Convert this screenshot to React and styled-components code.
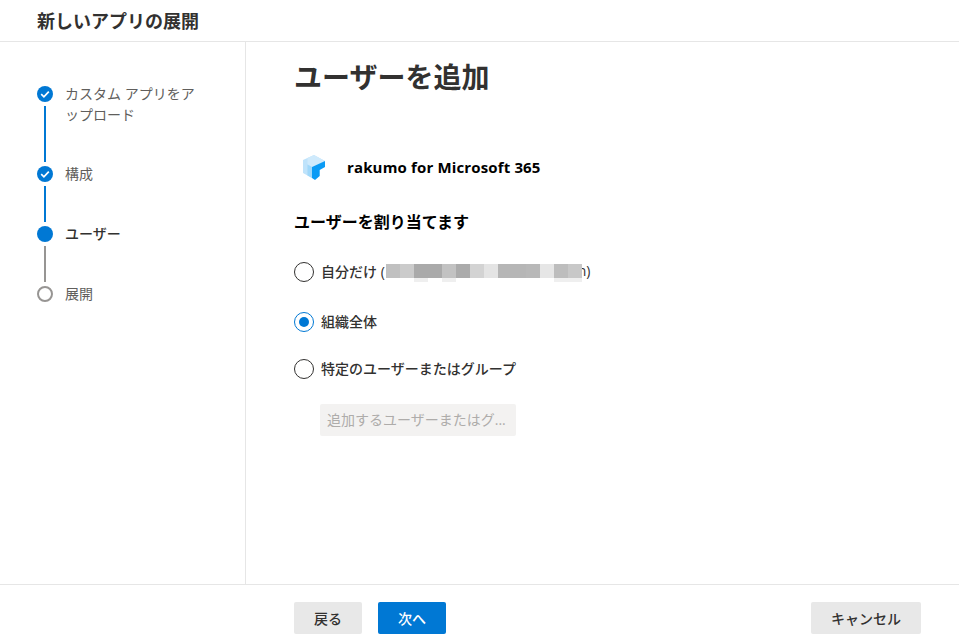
import React from 'react';
import styled, { createGlobalStyle } from 'styled-components';

const GlobalStyle = createGlobalStyle`
    html, body { margin: 0; padding: 0; background: #fff; }
    body { font-family: "Open Sans", "Noto Sans CJK JP", sans-serif; color: #323130; }
`
const Page = styled.div`
    width: 959px;
    height: 641px;
    display: flex;
    flex-direction: column;
    overflow: hidden;
`
const Header = styled.header`
    height: 42px;
    box-sizing: border-box;
    flex: none;
    display: flex;
    align-items: center;
    padding-left: 37px;
    border-bottom: solid 1px #e6e6e6;
`
const Title = styled.h1`
    margin: 0;
    font-size: 18px;
    font-weight: 700;
    line-height: 42px;
    color: #323130;
`
const Body = styled.div`
    flex: 1;
    display: flex;
    min-height: 0;
`
const Sidebar = styled.nav`
    width: 246px;
    flex: none;
    box-sizing: border-box;
    padding: 44px 0 0 37px;
    border-right: solid 1px #e6e6e6;
`
const Step = styled.div`
    display: flex;
    height: ${props => props.height}px;
`
const Rail = styled.div`
    width: 16px;
    flex: none;
    display: flex;
    flex-direction: column;
    align-items: center;
`
const Dot = styled.div`
    width: 16px;
    height: 16px;
    flex: none;
    box-sizing: border-box;
    border-radius: 50%;
    display: flex;
    align-items: center;
    justify-content: center;
    background: ${props => props.todo ? '#fff' : '#0078d4'};
    border: ${props => props.todo ? 'solid 2px #979593' : 'none'};
`
const Connector = styled.div`
    width: 2px;
    flex: 1;
    margin: 4px 0;
    background: ${props => props.todo ? '#979593' : '#0078d4'};
`
const StepLabel = styled.div`
    margin-left: 12px;
    width: 140px;
    margin-top: -3px;
    font-size: 14px;
    line-height: 21px;
    color: ${props => props.active ? '#323130' : '#605e5c'};
    font-weight: ${props => props.active ? 500 : 400};
`
const Main = styled.main`
    flex: 1;
    padding-left: 48px;
`
const Heading = styled.h2`
    margin: 0;
    padding-top: 15px;
    font-size: 28px;
    line-height: 40px;
    font-weight: 700;
    color: #323130;
`
const AppRow = styled.div`
    display: flex;
    align-items: center;
    margin-top: 50px;
    height: 40px;
`
const AppLogo = styled.svg`
    width: 22px;
    height: 25px;
    margin-left: 9px;
`
const AppName = styled.div`
    margin-left: 22px;
    font-size: 15px;
    letter-spacing: 0.15px;
    font-weight: 700;
    color: #000;
`
const SectionTitle = styled.h3`
    margin: 23px 0 0;
    font-size: 16px;
    line-height: 24px;
    font-weight: 700;
    color: #000;
`
const Options = styled.div`
    display: flex;
    flex-direction: column;
    margin-top: 28px;
`
const Option = styled.label`
    display: flex;
    align-items: center;
    height: 20px;
    margin-bottom: ${props => props.gap}px;
    font-size: 14px;
    font-weight: 500;
    color: #323130;
`
const OptionText = styled.span`
    display: flex;
    margin-top: -2px;
`
const Radio = styled.span`
    width: 20px;
    height: 20px;
    box-sizing: border-box;
    flex: none;
    margin-right: 7px;
    border-radius: 50%;
    display: flex;
    align-items: center;
    justify-content: center;
    border: solid 1px ${props => props.checked ? '#0078d4' : '#323130'};
    &::after {
        content: '';
        width: 10px;
        height: 10px;
        border-radius: 50%;
        background: ${props => props.checked ? '#0078d4' : 'transparent'};
    }
`
const Blur = styled.span`
    position: relative;
    display: inline-flex;
    height: 20px;
    margin: 0 -4px 0 1px;
`
const BlurCell = styled.span`
    width: 14px;
    height: 14px;
    margin-top: 3px;
    background: ${props => props.color};
    box-shadow: ${props => props.tail ? '0 4px 0 #efefef' : 'none'};
`
const PeopleInput = styled.div`
    width: 196px;
    height: 32px;
    box-sizing: border-box;
    margin: -2px 0 0 26px;
    padding-left: 7px;
    border-radius: 2px;
    background: #f3f2f1;
    color: #aeacaa;
    font-size: 14px;
    line-height: 32px;
`
const Footer = styled.footer`
    height: 57px;
    box-sizing: border-box;
    flex: none;
    display: flex;
    align-items: flex-start;
    padding: 17px 38px 0 294px;
    border-top: solid 1px #e6e6e6;
`
const Button = styled.button`
    height: 32px;
    width: ${props => props.width}px;
    margin-right: 16px;
    padding: 0;
    border: none;
    border-radius: 2px;
    font-family: inherit;
    font-size: 14px;
    font-weight: 500;
    background: ${props => props.primary ? '#0078d4' : '#e8e8e8'};
    color: ${props => props.primary ? '#fff' : '#323130'};
`
const CancelButton = styled(Button)`
    margin: 0 0 0 auto;
`

const blurCells = [
    ['#c0c0c0'], ['#cbcbcb'], ['#aaaaaa', true], ['#aaaaaa'], ['#c2c2c2', true], ['#ababab'], ['#d3d3d3'],
    ['#e4e4e4'], ['#b6b6b6'], ['#b6b6b6'], ['#b8b8b8'], ['#e6e6e6'], ['#bdbdbd', true], ['#c8c8c8', true]
]

const Check = () => (
    <svg width="10" height="10" viewBox="0 0 10 10" fill="none">
        <path d="M1.2 5.2 L3.9 7.8 L8.8 2.6" stroke="#fff" strokeWidth="1.7" />
    </svg>
)

const App = () => (
    <Page>
        <GlobalStyle />
        <Header>
            <Title>新しいアプリの展開</Title>
        </Header>
        <Body>
            <Sidebar>
                <Step height={80}>
                    <Rail><Dot><Check /></Dot><Connector /></Rail>
                    <StepLabel>カスタム アプリをアップロード</StepLabel>
                </Step>
                <Step height={60}>
                    <Rail><Dot><Check /></Dot><Connector /></Rail>
                    <StepLabel>構成</StepLabel>
                </Step>
                <Step height={60}>
                    <Rail><Dot /><Connector todo /></Rail>
                    <StepLabel active>ユーザー</StepLabel>
                </Step>
                <Step height={60}>
                    <Rail><Dot todo /></Rail>
                    <StepLabel>展開</StepLabel>
                </Step>
            </Sidebar>
            <Main>
                <Heading>ユーザーを追加</Heading>
                <AppRow>
                    <AppLogo viewBox="0 0 22 25">
                        <path d="M0 5 L11 0 L22 6 L9 12 L9 23 L0 18 Z" fill="#bfe3fb" />
                        <path d="M4.5 3 L11 0 L22 6 L9 12 L4.5 9.5 Z" fill="#cfeafc" />
                        <path d="M4.5 9.5 L9 12 L9 23 L4.5 20.5 Z" fill="#a0d8fa" />
                        <path d="M9 12 L22 6 L22 12 L16.7 15 L16.7 21 L12 25 L9 23 Z" fill="#0a9bf5" />
                    </AppLogo>
                    <AppName>rakumo for Microsoft 365</AppName>
                </AppRow>
                <SectionTitle>ユーザーを割り当てます</SectionTitle>
                <Options>
                    <Option gap={30}>
                        <Radio />
                        <OptionText>
                            自分だけ (
                            <Blur>{blurCells.map(([c, tail], i) => <BlurCell key={i} color={c} tail={tail} />)}</Blur>
                            n)
                        </OptionText>
                    </Option>
                    <Option gap={27}><Radio checked /><OptionText>組織全体</OptionText></Option>
                    <Option gap={27}><Radio /><OptionText>特定のユーザーまたはグループ</OptionText></Option>
                    <PeopleInput>追加するユーザーまたはグ...</PeopleInput>
                </Options>
            </Main>
        </Body>
        <Footer>
            <Button width={68}>戻る</Button>
            <Button width={68} primary>次へ</Button>
            <CancelButton width={110}>キャンセル</CancelButton>
        </Footer>
    </Page>
)

export default App
